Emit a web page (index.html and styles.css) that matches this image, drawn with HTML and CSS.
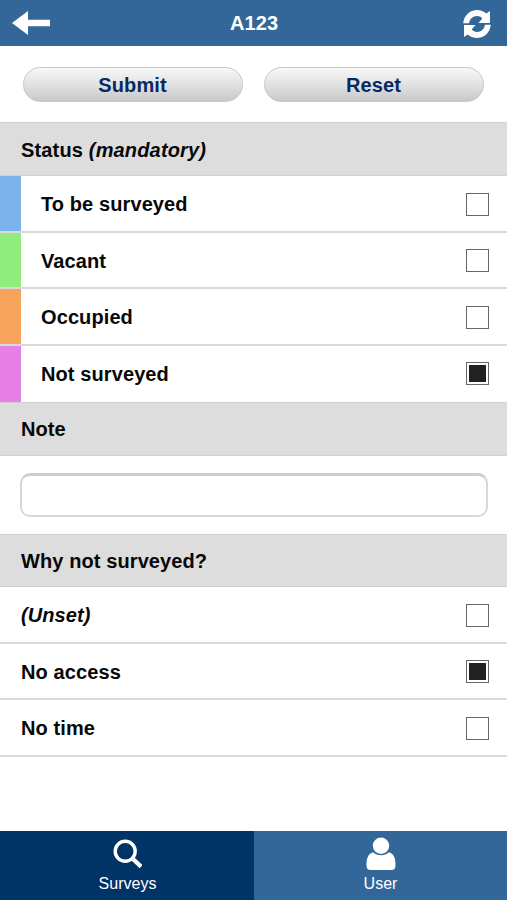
FILE: index.html
```html
<!DOCTYPE html>
<html lang="en">
<head>
<meta charset="utf-8">
<title>A123</title>
<link rel="stylesheet" href="styles.css">
</head>
<body>
<div class="app">
  <header class="topbar">
    <svg class="back" width="38" height="24" viewBox="0 0 38 24"><path fill="#fff" d="M0 12 16 0v8.800h22v6.500H16V24z"/></svg>
    <h1>A123</h1>
    <svg class="refresh" width="28" height="28" viewBox="0 0 28 28">
      <g id="half"><path fill="#fff" d="M.2 13.300C1 5.300 7 0 14 0c3.700 0 6.800 1.200 9.300 3.500L27 1v12H15.500l3.800-4.500C17.800 6.900 16 6.100 14 6.100c-4.200 0-7.200 2.900-8 7.200z"/></g>
      <use href="#half" transform="rotate(180 14 14)"/>
    </svg>
  </header>
  <main>
    <div class="actions"><button>Submit</button><button>Reset</button></div>
    <h2 class="status">Status&nbsp;<em>(mandatory)</em></h2>
    <ul>
      <li class="tag blue"><span>To be surveyed</span><i class="box"></i></li>
      <li class="tag green"><span>Vacant</span><i class="box"></i></li>
      <li class="tag orange"><span>Occupied</span><i class="box"></i></li>
      <li class="tag pink"><span>Not surveyed</span><i class="box checked"></i></li>
    </ul>
    <h2>Note</h2>
    <div class="note"><input type="text" aria-label="Note"></div>
    <h2>Why not surveyed?</h2>
    <ul>
      <li><em>(Unset)</em><i class="box"></i></li>
      <li><span>No access</span><i class="box checked"></i></li>
      <li><span>No time</span><i class="box"></i></li>
    </ul>
  </main>
  <nav>
    <a class="active">
      <svg width="30" height="30" viewBox="0 0 30 30" fill="none" stroke="#fff"><circle cx="13.200" cy="12.300" r="10" stroke-width="3.400"/><path stroke-width="4.200" d="m19.900 19 9.200 8.600"/></svg>
      <span>Surveys</span>
    </a>
    <a>
      <svg width="30" height="33" viewBox="0 0 30 33" fill="#fff"><circle cx="15" cy="8.800" r="8.200"/><path d="M7 15.200C11 19.200 19 19.200 23 15.200 28 16.500 29.700 22 29.500 28.500Q29.400 33 25.500 33H4.500Q.6 33 .5 28.500C.3 22 2 16.500 7 15.200z"/></svg>
      <span>User</span>
    </a>
  </nav>
</div>
</body>
</html>
```
FILE: styles.css
```css
* { box-sizing: border-box; }
body {
  margin: 0;
  background: #fff;
  color: #080808;
  font: bold 20px/24px "Liberation Sans", Arial, sans-serif;
  letter-spacing: .1px;
}
.app { display: flex; flex-direction: column; height: 900px; }
.topbar {
  flex: none;
  display: grid;
  grid-template-columns: 40px 1fr 28px;
  align-items: center;
  height: 46px;
  padding: 0 16px 0 12px;
  background: #336699;
  color: #fff;
}
.topbar h1 { margin: 0; padding-right: 7px; font-size: 20px; text-align: center; }
.topbar svg { display: block; }
.topbar .refresh { margin-top: 1px; }
main { flex: 1; }
.actions { display: flex; gap: 21px; height: 76px; padding: 21px 23px 20px; }
button {
  flex: 1;
  border: 1.5px solid #c8c8c8;
  border-radius: 18px;
  padding: 0 1px 0 0;
  background: linear-gradient(#f8f8f8, #e2e2e2 50%, #c8c8c8);
  color: #062a63;
  font: inherit;
  letter-spacing: .12px;
}
h2 {
  display: flex;
  align-items: center;
  height: 53.5px;
  margin: 0;
  padding: 1px 21px 0;
  border: solid #d0d0d0;
  border-width: 1px 0;
  background: #ddd;
  font-size: 20px;
}
.status { height: 54px; letter-spacing: .16px; }
ul { list-style: none; margin: 0; padding: 0; }
li {
  display: flex;
  align-items: center;
  justify-content: space-between;
  height: 56.5px;
  padding: 2px 18.5px 0 21px;
  border-bottom: 2px solid #d9d9d9;
}
.tag { padding-left: 0; }
.tag::before { content: ""; flex: none; align-self: stretch; width: 20.5px; margin: -2px 20.5px 0 0; }
.tag span { flex: 1; }
.blue::before { background: #7cb3ed; }
.green::before { background: #90ed7d; }
.orange::before { background: #f7a35c; }
.pink::before { background: #e67fe6; }
.pink { padding-top: 0; border-bottom: 0; }
.pink::before { margin-top: 0; }
.box { flex: none; width: 23px; height: 23px; border: 1.5px solid #666; background: #fff; }
.checked { padding: 2px; background: #222 content-box; }
.note { height: 78px; padding: 17px 19px 0 20px; }
input {
  display: block;
  width: 100%;
  height: 44px;
  border: 2px solid #d8d8d8;
  border-top: 3px solid #ccc;
  border-radius: 10px;
  background: #fff;
}
nav { flex: none; display: flex; height: 69px; background: #336699; color: #fff; font: 16px/20px "Liberation Sans", Arial, sans-serif; letter-spacing: 0; }
nav a { display: flex; flex-direction: column; align-items: center; width: 253px; padding-top: 6px; }
nav a.active { width: 254px; background: #003366; padding-top: 8px; }
nav svg { display: block; height: 33px; }
nav .active svg { height: 30px; }
nav span { margin-top: 4px; }
nav .active span { margin-top: 5px; padding-left: 1px; }
```
